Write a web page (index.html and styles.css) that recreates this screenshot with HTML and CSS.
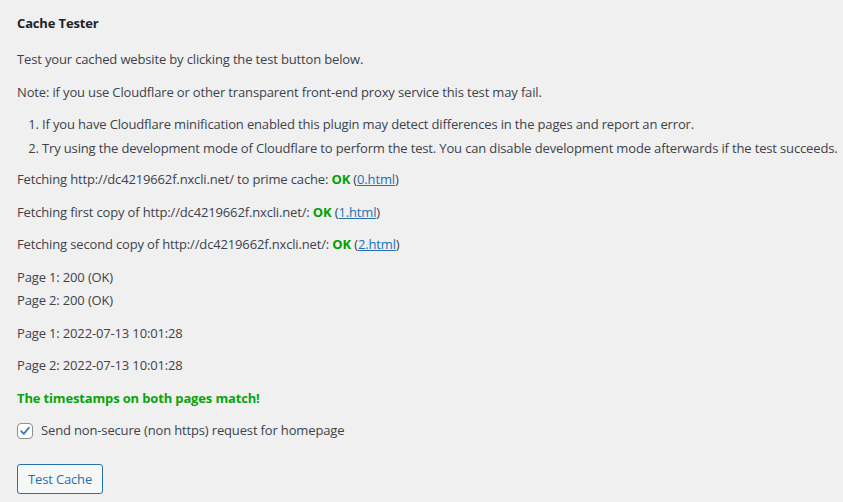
FILE: index.html
```html
<!DOCTYPE html>
<html>
<head>
<meta charset="utf-8">
<link rel="stylesheet" href="styles.css">
</head>
<body>
<div class="wrap">
  <h4 class="title">Cache Tester</h4>
  <p>Test your cached website by clicking the test button below.</p>
  <p>Note: if you use Cloudflare or other transparent front-end proxy service this test may fail.</p>
  <ol class="notes">
    <li>If you have Cloudflare minification enabled this plugin may detect differences in the pages and report an error.</li>
    <li>Try using the development mode of Cloudflare to perform the test. You can disable development mode afterwards if the test succeeds.</li>
  </ol>
  <p>Fetching http://dc4219662f.nxcli.net/ to prime cache: <span class="ok">OK</span> (<a href="#">0.html</a>)</p>
  <p>Fetching first copy of http://dc4219662f.nxcli.net/: <span class="ok">OK</span> (<a href="#">1.html</a>)</p>
  <p>Fetching second copy of http://dc4219662f.nxcli.net/: <span class="ok">OK</span> (<a href="#">2.html</a>)</p>
  <div class="status">
    <div class="status-line">Page 1: 200 (OK)</div>
    <div class="status-line">Page 2: 200 (OK)</div>
  </div>
  <p>Page 1: 2022-07-13 10:01:28</p>
  <p>Page 2: 2022-07-13 10:01:28</p>
  <p class="match">The timestamps on both pages match!</p>
  <label class="check">
    <span class="box"><svg viewBox="0 0 16 16" width="16" height="16"><path d="M3.6 8.2 L6.6 11.2 L12.4 4.4" fill="none" stroke="#3582c4" stroke-width="2.2" stroke-linecap="round" stroke-linejoin="round"/></svg></span>
    <span>Send non-secure (non https) request for homepage</span>
  </label>
  <div class="actions">
    <button class="button">Test Cache</button>
  </div>
</div>
</body>
</html>
```

FILE: styles.css
```css
html, body {
  margin: 0;
  padding: 0;
  background: #f0f0f1;
}
body {
  font-family: "Open Sans", "Noto Sans", sans-serif;
  font-size: 13px;
  letter-spacing: -0.15px;
  color: #3c434a;
  line-height: 1.4em;
}
.wrap {
  padding: 13px 0 0 17px;
}
.title {
  margin: 0 0 17px 0;
  font-size: 13px;
  font-weight: 700;
  color: #1d2327;
  line-height: 20px;
}
p {
  margin: 13px 0;
  line-height: 19.5px;
}
.notes {
  margin: 13px 0 0 0;
  padding-left: 25px;
  white-space: nowrap;
}
.notes li {
  margin-bottom: 6px;
  line-height: 18.2px;
}
.ok {
  color: #00a000;
  font-weight: 700;
}
a {
  color: #2271b1;
  text-decoration: underline;
}
.status {
  display: flex;
  flex-direction: column;
  gap: 4px;
  margin: 13px 0;
}
.status-line {
  line-height: 19.5px;
}
.match {
  color: #0ca20c;
  font-weight: 700;
}
.check {
  display: flex;
  align-items: center;
  gap: 8px;
  margin-top: 8px;
}
.box {
  width: 14px;
  height: 14px;
  border: 1px solid #8c8f94;
  border-radius: 4px;
  background: #fff;
  display: flex;
  align-items: center;
  justify-content: center;
}
.box svg {
  width: 14px;
  height: 14px;
}
.actions {
  margin-top: 24px;
}
.button {
  font-family: inherit;
  font-size: 13px;
  letter-spacing: inherit;
  color: #2271b1;
  background: #f6f7f7;
  border: 1px solid #2271b1;
  border-radius: 3px;
  height: 30px;
  padding: 0 10px;
  line-height: 28px;
  cursor: pointer;
}
```
